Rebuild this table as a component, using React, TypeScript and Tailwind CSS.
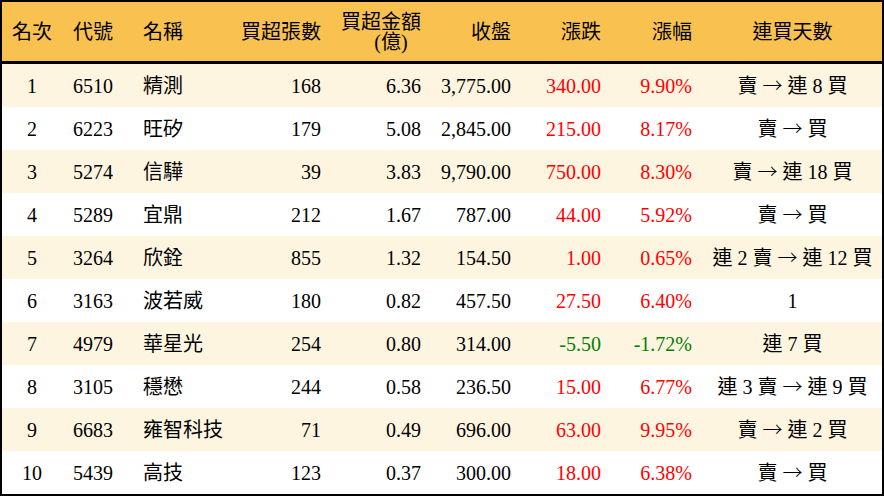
import React from "react";

type Row = {
  rank: string;
  code: string;
  name: string;
  vol: string;
  amt: string;
  close: string;
  chg: string;
  pct: string;
  days: string;
  up: boolean;
};

const rows: Row[] = [
  { rank: "1", code: "6510", name: "精測", vol: "168", amt: "6.36", close: "3,775.00", chg: "340.00", pct: "9.90%", days: "賣 → 連 8 買", up: true },
  { rank: "2", code: "6223", name: "旺矽", vol: "179", amt: "5.08", close: "2,845.00", chg: "215.00", pct: "8.17%", days: "賣 → 買", up: true },
  { rank: "3", code: "5274", name: "信驊", vol: "39", amt: "3.83", close: "9,790.00", chg: "750.00", pct: "8.30%", days: "賣 → 連 18 買", up: true },
  { rank: "4", code: "5289", name: "宜鼎", vol: "212", amt: "1.67", close: "787.00", chg: "44.00", pct: "5.92%", days: "賣 → 買", up: true },
  { rank: "5", code: "3264", name: "欣銓", vol: "855", amt: "1.32", close: "154.50", chg: "1.00", pct: "0.65%", days: "連 2 賣 → 連 12 買", up: true },
  { rank: "6", code: "3163", name: "波若威", vol: "180", amt: "0.82", close: "457.50", chg: "27.50", pct: "6.40%", days: "1", up: true },
  { rank: "7", code: "4979", name: "華星光", vol: "254", amt: "0.80", close: "314.00", chg: "-5.50", pct: "-1.72%", days: "連 7 買", up: false },
  { rank: "8", code: "3105", name: "穩懋", vol: "244", amt: "0.58", close: "236.50", chg: "15.00", pct: "6.77%", days: "連 3 賣 → 連 9 買", up: true },
  { rank: "9", code: "6683", name: "雍智科技", vol: "71", amt: "0.49", close: "696.00", chg: "63.00", pct: "9.95%", days: "賣 → 連 2 買", up: true },
  { rank: "10", code: "5439", name: "高技", vol: "123", amt: "0.37", close: "300.00", chg: "18.00", pct: "6.38%", days: "賣 → 買", up: true },
];

const grid = "grid grid-cols-[60px_70px_100px_100px_100px_90px_90px_91px_1fr]";

function Days({ text }: { text: string }) {
  const parts = text.split("→");
  if (parts.length === 1) return <>{text}</>;
  return (
    <>
      {parts[0]}
      <span className="inline-block w-[20px] text-center font-['Noto_Sans_CJK_TC',sans-serif] font-light">→</span>
      {parts[1]}
    </>
  );
}

export default function App() {
  return (
    <div
      className="w-[884px] h-[496px] border-2 border-black bg-white text-black text-[20px] overflow-hidden"
      style={{ fontFamily: '"Liberation Serif", "Noto Sans CJK TC", serif' }}
    >
      <div className={`${grid} h-[62px] bg-[#f9c150] border-b-[3px] border-black items-center leading-[20px]`}>
        <div className="text-center">名次</div>
        <div className="pl-[11px]">代號</div>
        <div className="pl-[11px]">名稱</div>
        <div className="text-right pr-[11px]">買超張數</div>
        <div className="text-right pr-[11px]">
          <div>買超金額</div>
          <div className="flex justify-end">
            <span className="inline-block w-[20px] text-right">(</span>
            <span className="inline-block w-[20px] text-center">億</span>
            <span className="inline-block w-[20px] text-left">)</span>
          </div>
        </div>
        <div className="text-right pr-[11px]">收盤</div>
        <div className="text-right pr-[11px]">漲跌</div>
        <div className="text-right pr-[11px]">漲幅</div>
        <div className="text-center">連買天數</div>
      </div>
      {rows.map((r, i) => {
        const color = r.up ? "text-[#ff0000]" : "text-[#008000]";
        return (
          <div
            key={r.rank}
            className={`${grid} h-[43px] items-center ${i % 2 === 0 ? "bg-[#fef5e0]" : "bg-white"}`}
          >
            <div className="text-center">{r.rank}</div>
            <div className="pl-[11px]">{r.code}</div>
            <div className="pl-[11px]">{r.name}</div>
            <div className="text-right pr-[11px]">{r.vol}</div>
            <div className="text-right pr-[11px]">{r.amt}</div>
            <div className="text-right pr-[11px]">{r.close}</div>
            <div className={`text-right pr-[11px] ${color}`}>{r.chg}</div>
            <div className={`text-right pr-[11px] ${color}`}>{r.pct}</div>
            <div className="text-center whitespace-nowrap">
              <Days text={r.days} />
            </div>
          </div>
        );
      })}
    </div>
  );
}
